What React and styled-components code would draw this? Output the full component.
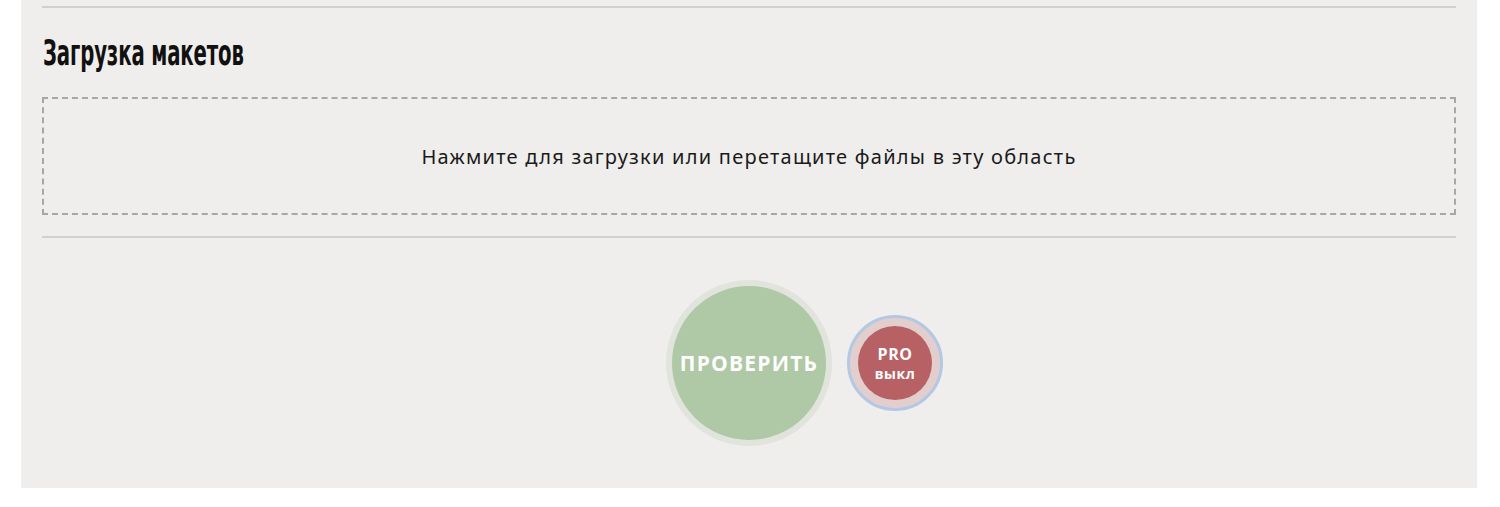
import React from 'react';
import styled, { createGlobalStyle } from 'styled-components';

const GlobalStyle = createGlobalStyle`
    html, body {
        margin: 0;
        padding: 0;
        background: #ffffff;
    }
    body {
        font-family: 'Open Sans', 'Liberation Sans', sans-serif;
    }
`

const Panel = styled.section`
    margin-left: 21px;
    width: 1456px;
    height: 488px;
    box-sizing: border-box;
    padding: 6px 21px 0;
    background: #efeeec;
`

const Divider = styled.hr`
    margin: 0;
    border: 0;
    height: 2px;
    background: #d0d0ce;
`

const Title = styled.h2`
    margin: 27px 0 0 1px;
    height: 36px;
    font-family: 'DejaVu Sans Condensed', 'DejaVu Sans', sans-serif;
    font-weight: 700;
    font-size: 35px;
    line-height: 36px;
    color: #111;
    letter-spacing: -0.2px;
    transform: scaleX(0.625);
    transform-origin: left center;
    white-space: nowrap;
`

const DropZone = styled.div`
    margin-top: 26px;
    height: 118px;
    box-sizing: border-box;
    border: 2px dashed #a7a7a7;
    display: flex;
    align-items: center;
    justify-content: center;
    font-family: 'Noto Sans', 'Open Sans', sans-serif;
    font-size: 20px;
    color: #1a1a1a;
    letter-spacing: 1.25px;
    cursor: pointer;
`

const Actions = styled.div`
    margin-top: 42px;
    display: grid;
    grid-template-columns: 1fr auto 1fr;
    align-items: center;
    column-gap: 15px;
`

const CheckButton = styled.button`
    grid-column: 2;
    width: 166px;
    height: 166px;
    box-sizing: border-box;
    border-radius: 50%;
    border: 6px solid #e1e4dc;
    background: #afc8a5;
    color: #fff;
    font-family: 'Open Sans', sans-serif;
    font-weight: 700;
    font-size: 21px;
    letter-spacing: 1.2px;
    padding: 0;
    cursor: pointer;
`

const ProToggle = styled.button`
    grid-column: 3;
    justify-self: start;
    width: 96px;
    height: 96px;
    box-sizing: border-box;
    border-radius: 50%;
    border: 3px solid #b3c8e5;
    padding: 0;
    background: #e2cfcd;
    display: flex;
    align-items: center;
    justify-content: center;
    cursor: pointer;
`

const ProInner = styled.span`
    width: 74px;
    height: 74px;
    border-radius: 50%;
    background: ${props => props.on ? '#8fb58a' : '#b86164'};
    color: #fff;
    display: flex;
    flex-direction: column;
    align-items: center;
    justify-content: center;
    gap: 1px;
    font-family: 'Open Sans', sans-serif;
    font-weight: 700;
`

const ProLabel = styled.span`
    display: block;
    font-size: ${props => props.small ? '14px' : '16px'};
    line-height: ${props => props.small ? '18px' : '20px'};
    letter-spacing: 0.5px;
`

const App = () => (
    <>
        <GlobalStyle />
        <Panel>
            <Divider />
            <Title>Загрузка макетов</Title>
            <DropZone>Нажмите для загрузки или перетащите файлы в эту область</DropZone>
            <Divider style={{ marginTop: 21 }} />
            <Actions>
                <CheckButton>ПРОВЕРИТЬ</CheckButton>
                <ProToggle>
                    <ProInner>
                        <ProLabel>PRO</ProLabel>
                        <ProLabel small>выкл</ProLabel>
                    </ProInner>
                </ProToggle>
            </Actions>
        </Panel>
    </>
);

export default App;
